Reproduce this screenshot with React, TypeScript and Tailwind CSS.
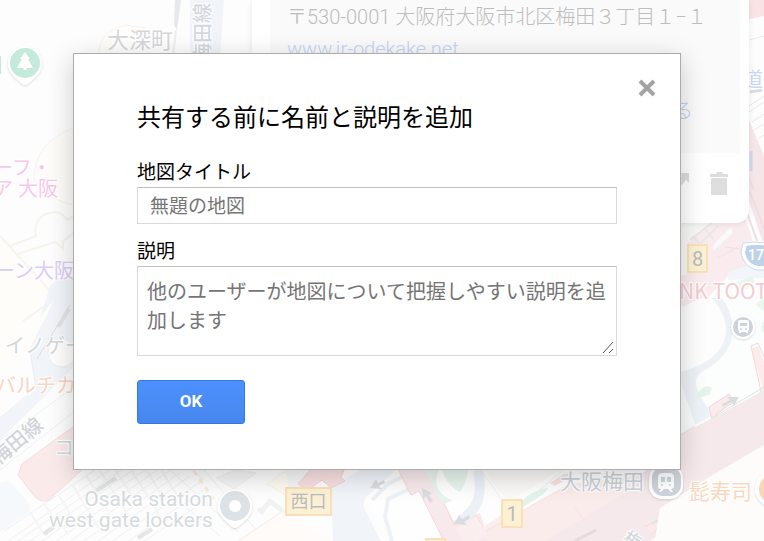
import type { ReactNode } from "react";

const halo =
  "[text-shadow:0_0_2px_#fff,1px_1px_1px_#fff,-1px_-1px_1px_#fff,1px_-1px_1px_#fff,-1px_1px_1px_#fff]";

function MapLabel({ className, children }: { className: string; children: ReactNode }) {
  return <span className={`absolute whitespace-nowrap ${halo} ${className}`}>{children}</span>;
}

function ExitBadge({ className, children }: { className: string; children: ReactNode }) {
  return (
    <span
      className={`absolute flex items-center justify-center border-2 border-[#fbdfba] bg-[#fcf2d3] text-[#b9bbc0] ${className}`}
    >
      {children}
    </span>
  );
}

/* Streets, buildings and rail lines under the labels */
function MapCanvas() {
  return (
    <svg
      className="absolute inset-0 h-full w-full"
      viewBox="0 0 764 541"
      preserveAspectRatio="xMinYMin slice"
      fill="none"
      aria-hidden="true"
    >
      <rect width="764" height="541" fill="#fdfdfd" />

      {/* north-west */}
      <path d="M190 0h34l-4 60h-30z" fill="#f1f5f9" />
      <path d="M175 0h6l-4 30-3-5z" fill="#e7e8e9" />
      <path d="M176 30l-3 26" stroke="#eeeeef" strokeWidth="2" />
      <path d="M99 56c0-20 8-25 27-31l20 3" stroke="#f8f3e7" strokeWidth="1" fill="#fefdfa" />
      <path d="M80 126c-30 8-46 28-46 52 8 14 20 24 46 28z" fill="#fdfcf9" stroke="#f7f4ec" strokeWidth="1" />
      <path d="M0 235l53 58-23 20-30 58z" fill="#fefdfa" />
      <path
        d="M0 236l52 57-3 10-26 18M10 246l26-10c-3-14 6-24 19-24 7 1 10 4 12 8l10-6M18 254l37-12 8 7v-8l14-10"
        stroke="#f7f4ec"
        strokeWidth="2"
      />

      {/* west streets */}
      <path d="M50 286l8-8h15v90L0 440v-22l36-28-6-40z" fill="#f1f5f9" />
      <path d="M0 370l55-72-25 50z" fill="#fefdfa" />
      <path d="M30 350l6 38-36 30" stroke="#e8eef4" />
      <circle cx="62" cy="353" r="14" fill="#fdfdfd" stroke="#eceff2" />
      <path d="M70 305l-33 54" stroke="#dddfe1" strokeWidth="1" />
      <path d="M69 309l-11 18" stroke="#e2e3e4" strokeWidth="4" />
      <path d="M0 440l80-57v24L0 470z" fill="#fdfdfd" stroke="#eef1f4" />
      <path d="M22 464l52-38h10v42l-35 32c-5 2-10 1-14-3l-17-22z" fill="#faeaea" stroke="#f7dedf" />
      <path d="M0 483l9-2 20 22c2 5 1 9-4 12L0 532z" fill="#f6f9fc" />

      {/* rail yard */}
      <g stroke="#f0f0f0" strokeWidth="1">
        <path d="M8 541L112 468M18 541L124 468M30 541L136 468M42 541L148 468M56 541L160 468M70 541L170 470M84 541L180 473M98 541L190 476M112 541L200 482M128 541L204 490M144 541L208 499M4 531L98 468" />
        <path
          d="M30 512l14 22M44 503l16 26M58 494l18 30M72 484l20 33M86 475l22 36M100 471l22 34M114 468l22 34M130 468l20 32M145 468l20 32M160 468l20 32M60 521l8 14M92 517l10 16M122 505l14 24M150 500l12 20"
          strokeWidth="2"
          stroke="#f5f5f5"
        />
      </g>
      <path d="M96 491l20-13M44 534l10-7M138 538l14-9" stroke="#e5e6e6" strokeWidth="4" />
      <path d="M170 470l68 62M204 470l62 71M192 470l12 10M180 502l40 34" stroke="#edf0f0" />
      <path d="M194 471l22 32" stroke="#fcecd1" strokeWidth="3" strokeDasharray="5 5" />
      <path d="M216 478l20-8 20 3-22 16z" fill="#f6f6f6" stroke="#eff0f0" />
      <path d="M238 541l45-30 50 30z" fill="#fefbf8" />
      <path d="M238 541l45-30 28-14" stroke="#f8eadc" />
      <path d="M260 513l10-12M268 500l14 10M258 509l6 4" stroke="#f1f2f2" strokeWidth="5" />
      <path d="M267 484l16-12h8l-4 24z" fill="#fdfbf2" stroke="#f8f3e6" />
      <path d="M286 470h35l-12 14 3 10h-22z" fill="#f6f7f8" />

      {/* south streets */}
      <path d="M331 486l30-16h35l-30 27-3 9 18 35h-48z" fill="#f1f5fa" />
      <path d="M366 500l24-20 22-12h12l10 20 20 53h-60z" fill="#fefefe" />
      <path d="M298 484l14-16h33l-4 9 4 4-14 7-9-8-14 10z" fill="#f9e1e3" stroke="#f6d2d5" />
      <path d="M372 500l16-16 24-12M392 541l-7-24 3-18 24-11" stroke="#edf2f7" strokeWidth="4" />
      <path d="M430 470l26 50 20 0-20-50z" fill="#fefefe" />
      <path d="M398 469l13 26 8-4 25 50h46l-10-28-27 8-25-51z" fill="#f8eaec" />
      <path d="M398 469l13 26 8-4 25 50M428 470l25 52 1 3 22-9 7 11" stroke="#f6d6d9" />
      <path d="M456 528l20-12 7 11 25-16 4 9-34 21h-16z" fill="#fbeeee" />
      <path d="M425 470h14c-5 12-4 24 14 30l-8 4c-8-4-12-18-20-34zM442 470h26c-1 8-4 18-8 22-8-3-15-13-18-22z" fill="#e8f5ee" />
      <path d="M478 470c5 25 0 38-16 50" stroke="#ecf1f8" strokeWidth="10" />
      <path d="M485 470h76l-51 31c-10-6-20-21-25-31z" fill="#fbf9f6" />
      <path d="M481 470l24 34M520 507l42-36" stroke="#f0f0ee" />
      <path d="M522 503c2-8 20-15 26-15-2 6-14 12-26 20z" fill="#e3f4ea" />
      <path d="M550 483l14-9h10l-19 12z" fill="#f8e2e4" />
      <path d="M486 541v-10l84-47 70-8 40-42 84-50v72L650 541z" fill="#fbecec" />
      <path d="M486 531l84-47" stroke="#f6e0e1" />
      <path d="M545 541l80-48 55-57 84-49v80L650 541z" fill="#f5e9eb" />
      <path d="M575 508l10 13" stroke="#f6e0e1" />
      <path d="M655 541l5-33 104-66v99z" fill="#fdfcfa" />
      <path d="M645 527l12-7 3 6-9 9" fill="#fbe8e8" stroke="#f5dcde" />
      <path d="M652 524l6-3" stroke="#d5eee2" strokeWidth="2" />
      <path d="M575 541l21-11" stroke="#e5dbdc" strokeWidth="3" />
      <g fill="#d9dde0">
        <path d="M370 488l6-9 2 4 6-3 1 3-6 3 3 3z" />
        <path d="M422 488l10 5-3 2 4 6-3 2-4-7-3 3z" />
        <path d="M454 524l5-9 3 4 7-4 1 3-6 4 3 3z" />
      </g>

      {/* east streets */}
      <path d="M749 0h15v16l-15 3z" fill="#fae3e4" />
      <path
        d="M749 40l15-4M749 106l15-10M749 112l15-10M752 122l12-8M754 130l10-6M758 139l6-4"
        stroke="#e8e8e8"
      />
      <path d="M750 92l12-2" stroke="#d9dbdd" strokeWidth="3" />
      <path d="M749 120l15 36v90l-20-60z" fill="#f6e6e8" />
      <path d="M680 220h66l18 56v14l-62 26-22-11z" fill="#faecee" />
      <path d="M680 223h33l-26 21v30l-7 2z" fill="#f8f8f7" />
      <path d="M690 240l28-22M696 248l22-22M693 236l10 12M705 229l8 10" stroke="#e8e8e8" strokeWidth="2" />
      <path d="M714 244l17-17 2 6-20 18z" fill="#f8fafc" />
      <path d="M746 210l18 50M754 190l-6-14M750 192l14 37" stroke="#eedfe2" strokeWidth="2" />
      <path d="M725 247l22 3M717 258l20-10" stroke="#f3dfe4" />
      <path d="M700 306l28-30 36-11v155l-84 15V310z" fill="#fcfdfd" />
      <path d="M728 280v-8l36-12v18z" fill="#f2f5fa" />
      <path d="M733 284l18-8 4 6-10 8h-10zM756 304l8-6v14zM762 322h2v10h-2z" fill="#e8f6ed" />
      <path d="M680 310c18-15 38-16 47-4 10 22 0 46-47 65z" fill="#fdfdfd" />
      <path
        d="M712 298h10c18 27 14 55-17 72-14 8-12 18 8 45l-18 10-15-44V372c42-10 57-38 38-66z"
        fill="#edf2f7"
      />
      <path d="M697 395c4-8 10-11 15-7l-3 7-12 3z" fill="#e4f4ea" />
      <path d="M680 381l15 43-15 10z" fill="#fafbfb" />
      <path d="M709 407l20-13 5 8-18 12 3 7 41-22 2-14-11-36 7-3 6 16v72l-84 12v-2l33-16z" fill="#fbebeb" />
      <path d="M680 436l32-17-3-12 20-13 5 8-18 12 3 6 43-23-3-15-8-36 7-3 6 14" stroke="#f6d6d9" />
      <path d="M680 436l84-46v60l-104 60-15-30z" fill="#f5e9eb" />
      <path d="M712 418l52-31M680 435l15-9" stroke="#cfeadd" strokeWidth="1" />
      <path d="M727 397h12l-5 9-2-4-9 5-1-3 8-4z" fill="#d9dde0" />
      <path d="M751 151v20" stroke="#d3d7ef" strokeWidth="3" />
      <path d="M655 541l5-33 49-31 55-32v96z" fill="#fdfcfa" />

      {/* markers */}
      <g className="drop-shadow-[0_1px_1px_#0002]">
        <path d="M25 46a17.500 17.500 0 0 1 12 30l-9 8q-3 2-6 0l-9-8a17.500 17.500 0 0 1 12-30z" fill="#fff" />
        <path d="M235 489a17.500 17.500 0 0 1 12 30l-9 8q-3 2-6 0l-9-8a17.500 17.500 0 0 1 12-30z" fill="#fff" />
        <circle cx="743" cy="327" r="12" fill="#fff" />
        <rect x="649" y="465" width="34" height="34" rx="13" fill="#fff" />
        <circle cx="773" cy="489" r="18" fill="#fff" />
      </g>
      <path d="M0 56h1v18H0z" fill="#c4eadb" />
      <circle cx="25" cy="63" r="15" fill="#c4eadb" />
      <path d="M25 52l5 7h-2l5 9h-6.500v2h-3v-2H17l5-9h-2z" fill="#fff" />
      <circle cx="235" cy="506" r="15" fill="#dde2e7" />
      <circle cx="235" cy="506" r="6" fill="#fff" />
      <circle cx="743" cy="327" r="10" fill="#cdd3da" />
      <path d="M740 320h7q2 0 2 2v8l-1 1v2h-2v-1h-5v1h-2v-2l-1-1v-8q0-2 2-2z" fill="#fff" />
      <path d="M740 323h7v3h-7z" fill="#cdd3da" />
      <circle cx="741" cy="329" r="1" fill="#cdd3da" />
      <circle cx="746" cy="329" r="1" fill="#cdd3da" />
      <rect x="652" y="467" width="29" height="29" rx="11" fill="#cfd5dc" />
      <path
        d="M663 473h6q5 0 5 4v9q0 3-3 3l2 3h-2l-3-3h-4l-3 3h-2l2-3q-3 0-3-3v-9q0-4 5-4z"
        fill="#fff"
      />
      <path d="M661 477h4v5h-4zM667 477h4v5h-4z" fill="#cfd5dc" />
      <circle cx="662" cy="485" r="1" fill="#cfd5dc" />
      <circle cx="670" cy="485" r="1" fill="#cfd5dc" />
      <circle cx="774" cy="489" r="15" fill="#fbd5b6" />
      <path d="M745 244q12-2 24 0v24h-11c-9-1-14-8-15-16z" fill="#bfd2eb" stroke="#fff" strokeWidth="4" />
      <path d="M743 243q12-2 24 0v27h-10c-9-2-15-9-16-18z" stroke="#c9d8ec" />
    </svg>
  );
}

function MapLabels() {
  return (
    <div className="absolute inset-0 text-[20px] leading-[24px]">
      <MapLabel className="left-[107px] top-[29px] text-[22px] text-[#d6d6d8]">大深町</MapLabel>
      <MapLabel className="left-[173px] top-[21px] -rotate-90 font-medium text-[#d3d8df]">梅田線</MapLabel>
      <MapLabel className="left-[-7px] top-[158px] leading-[21px] text-[#f6c8ec]">
        ーフ・
        <br />ア 大阪
      </MapLabel>
      <MapLabel className="left-[-5px] top-[259px] text-[#dccdf3]">ーン大阪</MapLabel>
      <MapLabel className="left-[5px] top-[334px] text-[#d2d8da]">イノゲート</MapLabel>
      <MapLabel className="left-[-4px] top-[374px] text-[#f8d5bf]">バルチカ</MapLabel>
      <MapLabel className="left-[-13px] top-[429px] -rotate-40 font-medium text-[#d0d4d9]">梅田線</MapLabel>
      <MapLabel className="left-[54px] top-[436px] text-[#d2d8dc]">コ</MapLabel>
      <MapLabel className="left-[49px] top-[489px] text-right text-[21px] leading-[21px] text-[#d5dbde]">
        Osaka station
        <br />
        west gate lockers
      </MapLabel>
      <MapLabel className="left-[560px] top-[470px] text-[21px] text-[#cbd1d8]">大阪梅田</MapLabel>
      <MapLabel className="left-[689px] top-[480px] text-[21px] text-[#fad8c0]">髭寿司</MapLabel>
      <MapLabel className="left-[624px] top-[528px] rotate-30 text-[17px] font-medium text-[#d3d7db]">
        梅
      </MapLabel>
      <MapLabel className="left-[679px] top-[278px] font-['Noto_Sans_CJK_JP',sans-serif] text-[21px] text-[#f4cbd0]">
        NK TOOT
      </MapLabel>
      <MapLabel className="left-[743px] top-[68px] text-[#c6daf7]">道街</MapLabel>
      <span className="absolute left-[748px] top-[243px] text-[14px] font-medium text-white">176</span>
      <ExitBadge className="left-[285px] top-[487px] h-[29px] w-[47px] text-[18px]">西口</ExitBadge>
      <ExitBadge className="left-[501px] top-[499px] h-[29px] w-[22px]">1</ExitBadge>
      <ExitBadge className="left-[687px] top-[244px] h-[29px] w-[21px]">8</ExitBadge>
      <ExitBadge className="left-[425px] top-[538px] h-[29px] w-[21px]">{null}</ExitBadge>
    </div>
  );
}

/* Place card of the selected pin; its upper part runs off the window */
function PlaceCard() {
  return (
    <section className="absolute left-[252px] top-0 flex w-[497px] flex-col rounded-br-[13px] bg-white text-[20px] font-light shadow-[0_1px_6px_#00000018]">
      <div className="ml-[18px] mr-[9px] flex h-[153px] flex-col bg-[#fafafa] px-[17px] pt-[4px] leading-[26px]">
        <p className="whitespace-nowrap text-[#bdbdbd]">〒530-0001 大阪府大阪市北区梅田３丁目１−１</p>
        <a href="#site" className="mt-[6px] text-[#c3d5f6]">
          www.jr-odekake.net
        </a>
        <a href="#more" className="mr-[30px] mt-[36px] self-end text-[#bdd0f2]">
          Google マップで見る
        </a>
      </div>
      <div className="flex h-[70px] items-start justify-end gap-[18px] px-[18px] pt-[17px] text-[#dedede]">
        <svg width="24" height="26" viewBox="0 0 24 26" fill="currentColor" aria-hidden="true">
          <path d="M14 3h10v10l-3-3-5 6v6h-5v-8l6-8z" />
        </svg>
        <svg width="24" height="26" viewBox="0 0 24 26" fill="currentColor" aria-hidden="true">
          <path d="M3 4h6l1-2h5l1 2h5v3H3zM4 8h16v17H4z" />
        </svg>
      </div>
    </section>
  );
}

function ShareDialog() {
  return (
    <form
      role="dialog"
      aria-labelledby="dialog-title"
      onSubmit={(e) => e.preventDefault()}
      className="relative flex w-full max-w-[608px] flex-col border border-[#acacac] bg-white px-[63px] pb-[45px] pt-[24px] text-black shadow-[0_6px_24px_#00000033]"
    >
      <header className="-mr-[40px] flex items-start justify-between">
        <h1 id="dialog-title" className="pt-[23px] text-[24px] leading-[34px]">
          共有する前に名前と説明を追加
        </h1>
        <button type="button" aria-label="閉じる" className="text-[#a3a3a3]">
          <svg width="20" height="20" viewBox="0 0 20 20" stroke="currentColor" strokeWidth="4" aria-hidden="true">
            <path d="M3 3l14 14M17 3L3 17" />
          </svg>
        </button>
      </header>
      <label htmlFor="map-title" className="pt-[24px] text-[19px] leading-[28px]">
        地図タイトル
      </label>
      <input
        id="map-title"
        type="text"
        placeholder="無題の地図"
        className="h-[37px] w-full border border-[#d9d9d9] border-t-[#c0c0c0] px-[12px] pt-[1px] text-[19px] placeholder:text-[#757575]"
      />
      <label htmlFor="map-description" className="pt-[14px] text-[19px] leading-[28px]">
        説明
      </label>
      <div className="relative grid">
        <textarea
          id="map-description"
          placeholder="他のユーザーが地図について把握しやすい説明を追加します"
          className="h-[90px] w-full resize-y border border-[#d9d9d9] border-t-[#c0c0c0] px-[9px] py-[11px] text-[20px] leading-[29px] placeholder:text-[#757575]"
        />
        <svg
          className="pointer-events-none absolute bottom-px right-px bg-white"
          width="15"
          height="15"
          viewBox="0 0 15 15"
          stroke="#555"
          aria-hidden="true"
        >
          <path d="M2 13L12 2M8 13l4-4" />
        </svg>
      </div>
      <button
        type="submit"
        className="mt-[24px] h-[44px] w-[108px] rounded-[3px] border border-[#3079ed] bg-linear-to-b from-[#4d90fe] to-[#4787ed] text-[17px] font-bold text-white"
      >
        OK
      </button>
    </form>
  );
}

export default function App() {
  return (
    <main
      lang="ja"
      className="relative min-h-screen overflow-hidden bg-[#fdfdfd] pb-[71px] pl-[73px] pr-[83px] pt-[53px] font-[Roboto,'Noto_Sans_CJK_JP',sans-serif]"
    >
      <MapCanvas />
      <MapLabels />
      <PlaceCard />
      <ShareDialog />
    </main>
  );
}
